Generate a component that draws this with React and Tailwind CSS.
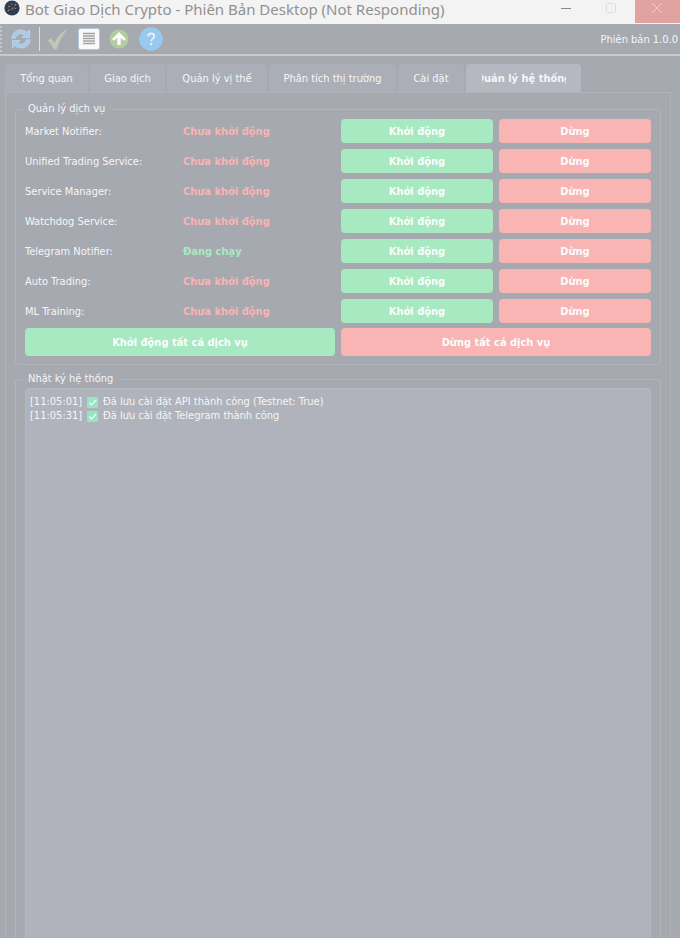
const tabs = [
  { label: 'Tổng quan', width: 'w-[83px]' },
  { label: 'Giao dịch', width: 'w-[75px]' },
  { label: 'Quản lý vị thế', width: 'w-[100px]' },
  { label: 'Phân tích thị trường', width: 'w-[127px]' },
  { label: 'Cài đặt', width: 'w-[66px]' },
];

const services = [
  { name: 'Market Notifier:', running: false },
  { name: 'Unified Trading Service:', running: false },
  { name: 'Service Manager:', running: false },
  { name: 'Watchdog Service:', running: false },
  { name: 'Telegram Notifier:', running: true },
  { name: 'Auto Trading:', running: false },
  { name: 'ML Training:', running: false },
];

const logs = [
  { time: '[11:05:01]', text: 'Đã lưu cài đặt API thành công (Testnet: True)' },
  { time: '[11:05:31]', text: 'Đã lưu cài đặt Telegram thành công' },
];

function AppIcon() {
  return (
    <svg viewBox="0 0 16 16" className="size-4 shrink-0" aria-hidden="true">
      <circle cx="8" cy="8" r="7.6" fill="#2b3d50" />
      <path d="M3.500 11 6 9l2 1 3.500-5" fill="none" stroke="#3f6b5c" strokeWidth="1" />
      <circle cx="5" cy="6.500" r=".8" fill="#c99a4a" />
      <circle cx="7.500" cy="4" r=".8" fill="#4f94b8" />
      <circle cx="11.500" cy="4.500" r="1" fill="#c8614e" />
      <circle cx="8.500" cy="8.500" r=".9" fill="#c8614e" />
      <circle cx="4.500" cy="10.500" r=".8" fill="#c99a4a" />
      <circle cx="11.500" cy="8.500" r=".7" fill="#5f9a7a" />
    </svg>
  );
}

function RefreshIcon() {
  return (
    <svg viewBox="0 0 20 20" className="size-5" aria-hidden="true">
      <g fill="#a9cae8" stroke="#c3dcf0" strokeWidth=".7" strokeLinejoin="round">
        <path d="M.8 9.200C1.200 4.500 5 1 9.800 1c2.400 0 4.600.900 6.200 2.400L18.600 1v7.600h-7.700l2.600-2.600A5.600 5.600 0 0 0 4.500 9.200z" />
        <path d="M19.200 10.800c-.4 4.700-4.200 8.200-9 8.200-2.400 0-4.600-.9-6.200-2.400L1.400 19v-7.600h7.700L6.500 14a5.600 5.600 0 0 0 9-3.200z" />
      </g>
    </svg>
  );
}

function ApplyIcon() {
  return (
    <svg viewBox="0 0 22 22" className="size-[22px]" aria-hidden="true">
      <path d="M.8 12.500 4 10.300l3.600 4.700C10 9.500 14.500 3.700 20.800.8c-5 5.700-8.800 12.700-11 20.400H6.800C5.200 17.700 3.300 14.900.8 12.500z" fill="#c1c9b9" stroke="#b2baa8" strokeWidth=".6" />
    </svg>
  );
}

function ListIcon() {
  return (
    <svg viewBox="0 0 22 22" className="size-[22px]" aria-hidden="true">
      <rect x=".5" y=".5" width="21" height="21" rx="2" fill="#f8f9fa" stroke="#b4c6da" />
      <path d="M5 5.500h12M5 8h12M5 10.500h12M5 13h12M5 15.500h12" stroke="#a3a3a5" strokeWidth="1.300" />
    </svg>
  );
}

function UpIcon() {
  return (
    <svg viewBox="0 0 20 20" className="size-5" aria-hidden="true">
      <circle cx="10" cy="10" r="9.500" fill="#b0cda0" />
      <path d="M10 3 17 10l-2 1.700-3.300-2.900V16H8.300V8.800L5 11.700 3 10z" fill="#fcfdfb" />
    </svg>
  );
}

function HelpIcon() {
  return (
    <svg viewBox="0 0 24 24" className="size-6" aria-hidden="true">
      <circle cx="12" cy="12" r="11.800" fill="#98c9ee" />
      <path d="M9 9.500c.2-1.900 1.400-3 3.200-3s3 1.100 3 2.700c0 2.300-3 2.500-3 5.100" fill="none" stroke="#e6f3fc" strokeWidth="1.800" />
      <circle cx="12.200" cy="17" r="1.200" fill="#e6f3fc" />
    </svg>
  );
}

function CheckMark() {
  return (
    <svg viewBox="0 0 11 11" className="size-[11px] shrink-0" aria-hidden="true">
      <rect width="11" height="11" rx="1" fill="#93e8bd" />
      <path d="m2.200 5.700 2.300 2.300 4.500-5" fill="none" stroke="#f4fff9" strokeWidth="1.200" />
    </svg>
  );
}

function ActionButton({ tone, className = 'h-6', children }) {
  const color = tone === 'start' ? 'bg-[#a7e9c0]' : 'bg-[#f9b4b4]';
  return (
    <button type="button" className={`rounded pt-0.5 font-bold text-[#fbfdfc] ${color} ${className}`}>
      {children}
    </button>
  );
}

function GroupBox({ title, className, children }) {
  return (
    <fieldset className={`min-w-0 rounded border border-[#b3b5ba] px-[9px] ${className}`}>
      <legend className="-ml-0.5 h-4 pl-[5px] pr-[7px] leading-4">{title}</legend>
      {children}
    </fieldset>
  );
}

export default function App() {
  return (
    <div className="flex h-screen flex-col overflow-hidden bg-[#a6a9b0] font-['DejaVu_Sans_Condensed','DejaVu_Sans',sans-serif] text-[11px] text-[#f5f6f7]">
      <header className="flex h-6 shrink-0 items-start bg-[#f3f3f3] pl-1">
        <AppIcon />
        <h1 className="flex-1 whitespace-nowrap pl-[5px] font-['Noto_Sans',sans-serif] text-[15px] leading-[18px] text-[#919191]">
          Bot Giao Dịch Crypto - Phiên Bản Desktop (Not Responding)
        </h1>
        <button type="button" aria-label="Minimize" className="flex h-6 w-[45px] items-center justify-center pb-2 pr-1">
          <svg viewBox="0 0 10 10" className="size-[10px]"><path d="M0 5.500h10" stroke="#8a8a8a" /></svg>
        </button>
        <button type="button" aria-label="Maximize" className="flex h-6 w-[45px] items-center justify-center pb-2 pr-1">
          <svg viewBox="0 0 10 10" className="size-[10px]"><rect x=".5" y=".5" width="9" height="9" rx="1" fill="none" stroke="#dcdcdc" /></svg>
        </button>
        <button type="button" aria-label="Close" className="flex h-[23px] w-[45px] items-center justify-center bg-[#e0a39f] pb-[7px] pr-0.5">
          <svg viewBox="0 0 10 10" className="size-[10px]"><path d="m0 0 10 10M10 0 0 10" stroke="#efcfcd" /></svg>
        </button>
      </header>

      <div role="toolbar" className="flex h-8 shrink-0 items-center border-b-2 border-[#c9cacd] pr-0.5">
        <span className="h-[26px] border-l-2 border-dotted border-[#c6c8cb]" />
        <button type="button" aria-label="Làm mới" className="ml-[9px]"><RefreshIcon /></button>
        <span className="ml-2 h-6 w-px bg-[#dfe0e2]" />
        <button type="button" aria-label="Áp dụng" className="ml-[7px]"><ApplyIcon /></button>
        <button type="button" aria-label="Nhật ký" className="ml-[9px]"><ListIcon /></button>
        <button type="button" aria-label="Cập nhật" className="ml-[9px]"><UpIcon /></button>
        <button type="button" aria-label="Trợ giúp" className="ml-2.5"><HelpIcon /></button>
        <span className="ml-auto pt-[3px]">Phiên bản 1.0.0</span>
      </div>

      <main className="flex min-h-0 flex-1 flex-col pl-[5px] pr-[9px] pt-2">
        <div role="tablist" className="flex shrink-0 gap-0.5">
          {tabs.map((tab) => (
            <button
              key={tab.label}
              type="button"
              role="tab"
              aria-selected="false"
              className={`h-7 whitespace-nowrap rounded-t bg-[#abaeb6] pt-0.5 ${tab.width}`}
            >
              {tab.label}
            </button>
          ))}
          <button
            type="button"
            role="tab"
            aria-selected="true"
            className="flex h-7 w-[115px] items-center justify-center rounded-t bg-[#b5b8c0] pt-0.5 font-bold"
          >
            <span className="flex w-[84px] justify-center overflow-hidden whitespace-nowrap">
              <span>Quản lý hệ thống</span>
            </span>
          </button>
        </div>

        <div role="tabpanel" className="flex min-h-0 flex-1 flex-col gap-1.5 border border-b-0 border-[#b1b3b8] px-[9px] pt-2">
          <GroupBox title="Quản lý dịch vụ" className="shrink-0 pb-2">
            <div className="grid grid-cols-4 gap-1.5 pt-0.5">
              {services.map((service) => (
                <div key={service.name} className="col-span-4 grid grid-cols-subgrid items-center">
                  <span className="whitespace-nowrap pt-0.5">{service.name}</span>
                  <span className={`pt-0.5 font-bold ${service.running ? 'text-[#a7e9c0]' : 'text-[#f9b4b4]'}`}>
                    {service.running ? 'Đang chạy' : 'Chưa khởi động'}
                  </span>
                  <ActionButton tone="start">Khởi động</ActionButton>
                  <ActionButton tone="stop">Dừng</ActionButton>
                </div>
              ))}
            </div>
            <div className="grid grid-cols-2 gap-1.5 pt-[5px]">
              <ActionButton tone="start" className="h-7">Khởi động tất cả dịch vụ</ActionButton>
              <ActionButton tone="stop" className="h-7">Dừng tất cả dịch vụ</ActionButton>
            </div>
          </GroupBox>

          <GroupBox title="Nhật ký hệ thống" className="flex flex-1 flex-col rounded-b-none border-b-0">
            <div role="log" className="mt-px flex-1 rounded-t border border-b-0 border-[#b6b8bc] bg-[#b0b3bb] px-1 pt-1.5 leading-[14px]">
              {logs.map((entry) => (
                <p key={entry.time} className="flex items-center whitespace-nowrap">
                  <span className="w-[57px]">{entry.time}</span>
                  <CheckMark />
                  <span className="pl-[5px]">{entry.text}</span>
                </p>
              ))}
            </div>
          </GroupBox>
        </div>
      </main>
    </div>
  );
}
